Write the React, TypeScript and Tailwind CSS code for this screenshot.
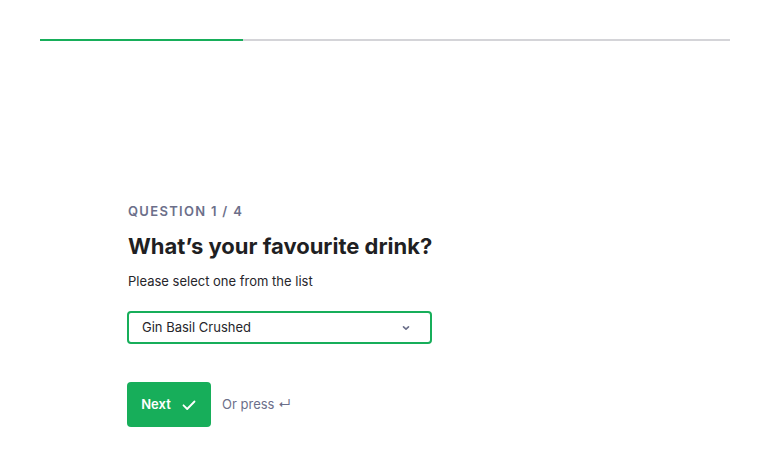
import React, { useState } from 'react';

const ChevronDown = () => (
    <svg width="10" height="10" viewBox="0 0 10 10" fill="none">
        <path d="M2.5 3.8L5 6.2L7.5 3.8" stroke="#6b6f8a" strokeWidth="1.6" strokeLinecap="round" strokeLinejoin="round" />
    </svg>
);

const Check = () => (
    <svg width="16" height="16" viewBox="0 0 16 16" fill="none">
        <path d="M2.5 8.3L6.2 12L13.5 4.5" stroke="white" strokeWidth="1.8" strokeLinecap="round" strokeLinejoin="round" />
    </svg>
);

const App: React.FC = () => {
    const [drink] = useState('Gin Basil Crushed');

    return (
        <div className="w-screen h-screen bg-white text-[#1f1f23] font-['Inter',sans-serif] pt-[39px] pl-[40px] pr-[41px]">
            <div className="flex h-[2px] w-full bg-[#d4d4d8]">
                <div className="h-full w-[203px] bg-[#17ae5a]"></div>
            </div>

            <div className="pl-[88px] pt-[162px]">
                <p className="text-[13px] leading-[16px] font-semibold tracking-[0.1em] text-[#6c6f8a]">QUESTION 1 / 4</p>
                <h1 className="mt-[12px] text-[22px] leading-[30px] font-bold text-[#1f1f23]">
                    What’s your favourite drink?
                </h1>
                <p className="mt-[10px] text-[13px] leading-[20px] text-[#26262b]">Please select one from the list</p>

                <div className="mt-[20px] flex h-[33px] w-[305px] items-center justify-between rounded-[4px] border-2 border-[#17ae5a] pl-[13px] pr-[19px] -ml-px">
                    <span className="text-[13px] text-[#26262b]">{drink}</span>
                    <ChevronDown />
                </div>

                <div className="mt-[38px] flex items-center gap-[11px] -ml-px">
                    <button className="flex h-[45px] w-[84px] items-center justify-center gap-[10px] rounded-[4px] bg-[#17ae5a] text-[13px] font-semibold text-white">
                        Next
                        <Check />
                    </button>
                    <span className="pt-px text-[13px] text-[#6c6f8a]">Or press ↵</span>
                </div>
            </div>
        </div>
    );
};

export default App;
